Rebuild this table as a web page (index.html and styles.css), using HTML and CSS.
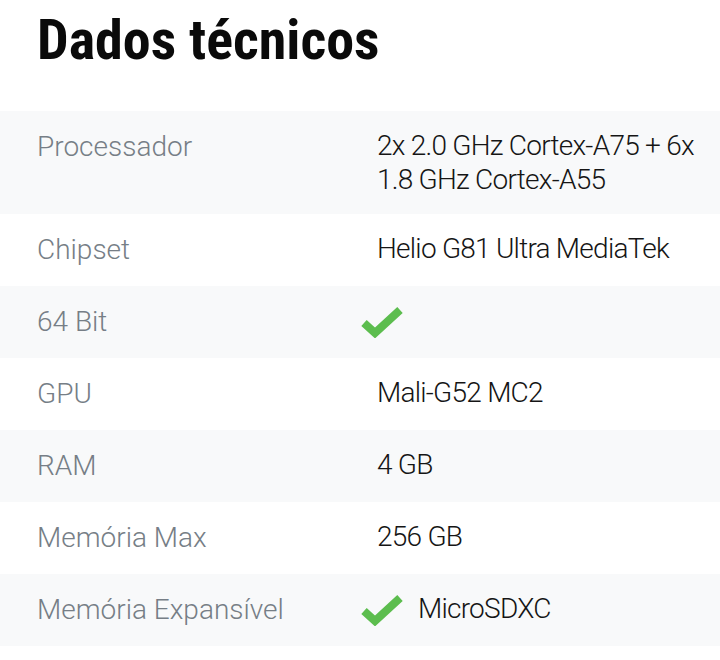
FILE: index.html
```html
<!DOCTYPE html>
<html lang="pt">
<head>
<meta charset="utf-8">
<title>Dados técnicos</title>
<link rel="stylesheet" href="styles.css">
</head>
<body>
<h1 class="title">Dados técnicos</h1>
<div class="specs">
  <div class="row alt">
    <div class="label">Processador</div>
    <div class="value">2x 2.0 GHz Cortex-A75 + 6x 1.8 GHz Cortex-A55</div>
  </div>
  <div class="row">
    <div class="label">Chipset</div>
    <div class="value">Helio G81 Ultra MediaTek</div>
  </div>
  <div class="row alt">
    <div class="label">64 Bit</div>
    <div class="value"><svg class="check" viewBox="0 0 44 32" width="44" height="32"><polyline points="4,17 15,27 40,4" fill="none" stroke="#5cbd4e" stroke-width="8" stroke-linejoin="miter"/></svg></div>
  </div>
  <div class="row">
    <div class="label">GPU</div>
    <div class="value">Mali-G52 MC2</div>
  </div>
  <div class="row alt">
    <div class="label">RAM</div>
    <div class="value">4 GB</div>
  </div>
  <div class="row">
    <div class="label">Memória Max</div>
    <div class="value">256 GB</div>
  </div>
  <div class="row alt">
    <div class="label">Memória Expansível</div>
    <div class="value with-icon"><svg class="check" viewBox="0 0 44 32" width="44" height="32"><polyline points="4,17 15,27 40,4" fill="none" stroke="#5cbd4e" stroke-width="8" stroke-linejoin="miter"/></svg><span>MicroSDXC</span></div>
  </div>
</div>
</body>
</html>
```
FILE: styles.css
```css
html, body {
  margin: 0;
  padding: 0;
  background: #ffffff;
}
body {
  font-family: Roboto, "Noto Sans", sans-serif;
  width: 720px;
  height: 660px;
  overflow: hidden;
}
.title {
  margin: 0;
  padding: 4px 0 0 37px;
  box-sizing: border-box;
  height: 111px;
  font-size: 56px;
  line-height: 72px;
  font-weight: 700;
  font-stretch: 75%;
  color: #0a0a0a;
}
.specs {
  display: flex;
  flex-direction: column;
}
.row {
  display: grid;
  grid-template-columns: 340px 1fr;
  padding: 17px 8px 17px 37px;
  align-items: start;
}
.row.alt {
  background: #f8f9fa;
}
.label {
  font-size: 28px;
  font-weight: 300;
  line-height: 38px;
  color: #767e86;
}
.value {
  font-size: 28px;
  font-weight: 300;
  line-height: 34px;
  letter-spacing: -0.75px;
  color: #151515;
  padding-top: 1px;
}
.value .check {
  display: block;
  margin: 2px 0 0 -17px;
}
.value.with-icon {
  display: flex;
  align-items: center;
  gap: 14px;
  margin-left: -17px;
}
.value.with-icon .check {
  margin: 2px 0 0 0;
}
```
